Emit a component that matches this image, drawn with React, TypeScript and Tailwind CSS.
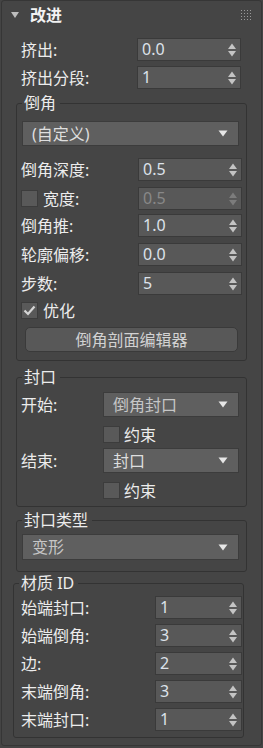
import React from "react";

const Arrows = ({ dim = false }: { dim?: boolean }) => (
  <svg width="8" height="14" viewBox="0 0 8 14" className="shrink-0">
    <polygon points="0,6 4,0.5 8,6" fill={dim ? "#7c7c7c" : "#c4c4c4"} />
    <polygon points="0,8 8,8 4,13.5" fill={dim ? "#7c7c7c" : "#c4c4c4"} />
  </svg>
);

const Spin = ({ value, narrow = false, disabled = false }: { value: string; narrow?: boolean; disabled?: boolean }) => (
  <div
    className={`flex h-[23px] shrink-0 items-center justify-between border border-[#3a3a3a] bg-[#585858] pl-[4px] pr-[4px] ${
      narrow ? "w-[87px]" : "w-[104px]"
    }`}
  >
    <span className={`text-[16px] leading-[21px] ${disabled ? "text-[#888888]" : "text-[#dde2ea]"}`}>{value}</span>
    <Arrows dim={disabled} />
  </div>
);

const DownTri = () => (
  <svg width="10" height="7" viewBox="0 0 10 7" className="shrink-0">
    <polygon points="0.5,0.5 9.5,0.5 5,6.5" fill="#e6e6e6" />
  </svg>
);

const Drop = ({ value, width, h26 = false, bright = false }: { value: string; width: string; h26?: boolean; bright?: boolean }) => (
  <div
    className={`flex shrink-0 items-center justify-between border border-[#3c3c3c] bg-[#5f5f5f] pl-[9px] pr-[10px] ${width} ${
      h26 ? "h-[26px]" : "h-[25px]"
    }`}
  >
    <span className={`text-[16px] leading-[20px] ${bright ? "text-[#dedede]" : "text-[#c6c6c6]"}`}>{value}</span>
    <DownTri />
  </div>
);

const Check = ({ checked = false }: { checked?: boolean }) => (
  <div className="flex h-[17px] w-[17px] shrink-0 items-center justify-center border border-[#3c3c3c] bg-[#595959]">
    {checked && (
      <svg width="13" height="11" viewBox="0 0 13 11">
        <polyline points="1.5,5.5 5,9 11.5,1.5" fill="none" stroke="#d6d6d6" strokeWidth="2.2" />
      </svg>
    )}
  </div>
);

const Label = ({ children }: { children: React.ReactNode }) => (
  <span className="text-[16px] leading-[20px] text-[#ececec]">{children}</span>
);

const Row = ({ label, value, narrow = false, className = "" }: { label: string; value: string; narrow?: boolean; className?: string }) => (
  <div className={`flex h-[23px] items-center justify-between ${className}`}>
    <Label>{label}</Label>
    <Spin value={value} narrow={narrow} />
  </div>
);

const GroupTitle = ({ children }: { children: React.ReactNode }) => (
  <span className="absolute left-[5px] top-[-10px] bg-[#454545] pl-[2px] pr-[4px] text-[16px] leading-[18px] text-[#ececec]">
    {children}
  </span>
);

export default function App() {
  return (
    <div className="h-[748px] w-[263px] overflow-hidden bg-[#444444] font-['Noto_Sans','Noto_Sans_CJK_SC',sans-serif]">
      <div className="ml-[1px] flex h-[746px] w-[261px] flex-col rounded-[3px] border border-[#363636] bg-[#454545]">
        {/* header */}
        <div className="flex h-[27px] shrink-0 items-center">
          <svg width="8" height="6" viewBox="0 0 8 6" className="ml-[9px] shrink-0">
            <polygon points="0,0 8,0 4,6" fill="#bdbdbd" />
          </svg>
          <span className="ml-[11px] text-[16px] font-bold leading-[20px] text-[#f2f2f2]">改进</span>
          <svg width="10" height="10" viewBox="0 0 10 10" className="ml-auto mr-[10px] shrink-0">
            {[0, 3, 6, 9].map((y) =>
              [0, 3, 6, 9].map((x) => <rect key={`${x}-${y}`} x={x} y={y} width="1" height="1" fill="#9a9a9a" />)
            )}
          </svg>
        </div>

        <div className="mt-[10px] flex flex-col pl-[19px] pr-[20px]">
          <Row label="挤出:" value="0.0" />
          <Row label="挤出分段:" value="1" className="mt-[5px]" />
        </div>

        {/* 倒角 */}
        <div className="relative ml-[14px] mt-[14px] w-[231px] rounded-[3px] border border-[#333333] pb-[8px] pl-[4px] pr-[4px] pt-[17px]">
          <GroupTitle>倒角</GroupTitle>
          <Drop value="(自定义)" width="w-[217px] ml-[1px]" bright />
          <Row label="倒角深度:" value="0.5" className="mt-[12px]" />
          <div className="mt-[6px] flex h-[23px] items-center justify-between">
            <div className="flex items-center">
              <Check />
              <span className="ml-[5px]">
                <Label>宽度:</Label>
              </span>
            </div>
            <Spin value="0.5" disabled />
          </div>
          <Row label="倒角推:" value="1.0" className="mt-[4px]" />
          <Row label="轮廓偏移:" value="0.0" className="mt-[6px]" />
          <Row label="步数:" value="5" className="mt-[6px]" />
          <div className="mt-[7px] flex h-[17px] items-center">
            <Check checked />
            <span className="ml-[5px]">
              <Label>优化</Label>
            </span>
          </div>
          <div className="ml-[4px] mt-[8px] flex h-[25px] w-[213px] items-center justify-center rounded-[5px] border border-[#3a3a3a] bg-[#585858]">
            <span className="text-[16px] leading-[20px] text-[#d2d2d2]">倒角剖面编辑器</span>
          </div>
        </div>

        {/* 封口 */}
        <div className="relative ml-[14px] mt-[16px] w-[231px] rounded-[3px] border border-[#333333] pb-[7px] pl-[4px] pr-[7px] pt-[14px]">
          <GroupTitle>封口</GroupTitle>
          <div className="flex h-[25px] items-center">
            <span className="w-[82px] shrink-0">
              <Label>开始:</Label>
            </span>
            <Drop value="倒角封口" width="w-[136px]" />
          </div>
          <div className="ml-[82px] mt-[9px] flex h-[17px] items-center">
            <Check />
            <span className="ml-[4px]">
              <Label>约束</Label>
            </span>
          </div>
          <div className="mt-[5px] flex h-[25px] items-center">
            <span className="w-[82px] shrink-0">
              <Label>结束:</Label>
            </span>
            <Drop value="封口" width="w-[136px]" bright />
          </div>
          <div className="ml-[82px] mt-[9px] flex h-[17px] items-center">
            <Check />
            <span className="ml-[4px]">
              <Label>约束</Label>
            </span>
          </div>
        </div>

        {/* 封口类型 */}
        <div className="relative ml-[14px] mt-[13px] w-[231px] rounded-[3px] border border-[#333333] pb-[11px] pl-[4px] pr-[4px] pt-[13px]">
          <GroupTitle>封口类型</GroupTitle>
          <Drop value="变形" width="w-[217px] ml-[1px]" h26 />
        </div>

        {/* 材质 ID */}
        <div className="relative ml-[11px] mt-[11px] w-[231px] rounded-[3px] border border-[#333333] pb-[6px] pl-[7px] pr-[1px] pt-[12px]">
          <GroupTitle>材质 ID</GroupTitle>
          <Row label="始端封口:" value="1" narrow />
          <Row label="始端倒角:" value="3" narrow className="mt-[5px]" />
          <Row label="边:" value="2" narrow className="mt-[5px]" />
          <Row label="末端倒角:" value="3" narrow className="mt-[5px]" />
          <Row label="末端封口:" value="1" narrow className="mt-[5px]" />
        </div>
      </div>
    </div>
  );
}
